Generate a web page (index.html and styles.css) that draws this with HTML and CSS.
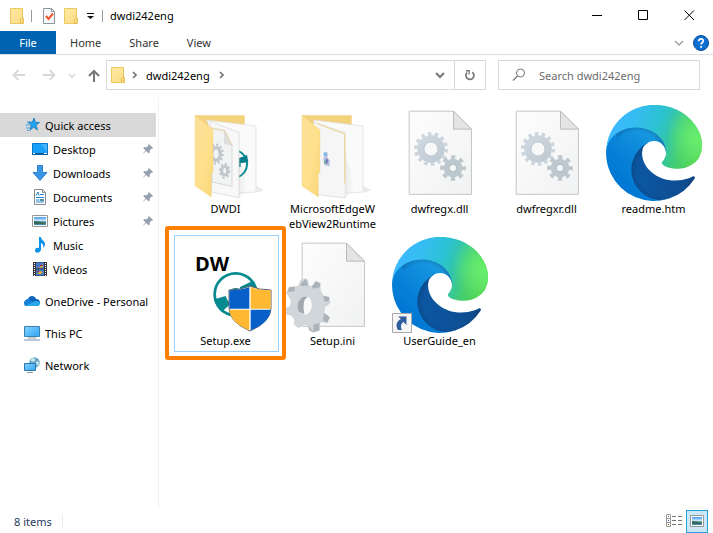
FILE: index.html
```html
<!DOCTYPE html>
<html lang="en">
<head>
<meta charset="utf-8">
<meta name="viewport" content="width=device-width, initial-scale=1">
<title>dwdi242eng</title>
<link rel="stylesheet" href="styles.css">
</head>
<body>
<svg class="defs" aria-hidden="true">
  <defs>
    <linearGradient id="fold" x1="0" y1="0" x2="1" y2="1"><stop offset="0" stop-color="#ffe9a3"/><stop offset="1" stop-color="#fbdc84"/></linearGradient>
    <linearGradient id="flap" x1="0" y1="0" x2="1" y2="1"><stop offset="0" stop-color="#fbe09a"/><stop offset=".55" stop-color="#ffe08c"/><stop offset="1" stop-color="#f8d679"/></linearGradient>
    <linearGradient id="paper" x1="0" y1="0" x2="1" y2="1"><stop offset="0" stop-color="#fdfdfd"/><stop offset="1" stop-color="#f1f2f3"/></linearGradient>
    <linearGradient id="shade"><stop offset="0" stop-color="#9a9a9a" stop-opacity=".4"/><stop offset="1" stop-color="#aaa" stop-opacity="0"/></linearGradient>
    <linearGradient id="steel" x1="0" y1="0" x2="1" y2="1"><stop offset="0" stop-color="#cfd8e2"/><stop offset="1" stop-color="#c0cad2"/></linearGradient>
    <linearGradient id="screen" x1="0" y1="0" x2="1" y2="1"><stop offset="0" stop-color="#7fd4ff"/><stop offset="1" stop-color="#36a4f4"/></linearGradient>
    <linearGradient id="sky" x1="0" y1="0" x2="0" y2="1"><stop offset="0" stop-color="#3f9af0"/><stop offset=".5" stop-color="#d8efff"/><stop offset=".6" stop-color="#3e7468"/><stop offset="1" stop-color="#4a8fb8"/></linearGradient>
    <linearGradient id="edge-dark" x1="63.3" y1="177" x2="241.6" y2="177" gradientUnits="userSpaceOnUse"><stop offset="0" stop-color="#0c59a4"/><stop offset=".5" stop-color="#0d529b"/><stop offset="1" stop-color="#114a8b"/></linearGradient>
    <linearGradient id="edge-blue" x1="157" y1="96" x2="46" y2="217" gradientUnits="userSpaceOnUse"><stop offset="0" stop-color="#1b9de2"/><stop offset=".16" stop-color="#1595df"/><stop offset=".67" stop-color="#0680d7"/><stop offset="1" stop-color="#0078d4"/></linearGradient>
    <linearGradient id="edge-teal" x1="25" y1="70" x2="245" y2="150" gradientUnits="userSpaceOnUse"><stop offset="0" stop-color="#3bb9fd"/><stop offset=".2" stop-color="#35bdf0"/><stop offset=".45" stop-color="#2bc2d3"/><stop offset=".62" stop-color="#33c5a8"/><stop offset=".8" stop-color="#44cc70"/><stop offset="1" stop-color="#50cf4c"/></linearGradient>
    <radialGradient id="edge-lime" cx="0" cy="0" r="97.3" gradientTransform="matrix(.28 .96 -.78 .23 246 95)" gradientUnits="userSpaceOnUse"><stop offset="0" stop-color="#68ee6c"/><stop offset=".3" stop-color="#66eb6e" stop-opacity=".85"/><stop offset="1" stop-color="#66eb6e" stop-opacity="0"/></radialGradient>
    <radialGradient id="edge-rim" cx="86" cy="138" r="86" gradientUnits="userSpaceOnUse"><stop offset=".72" stop-color="#0a3f70" stop-opacity="0"/><stop offset=".93" stop-color="#0a3f70" stop-opacity=".38"/><stop offset="1" stop-color="#0a3f70" stop-opacity=".6"/></radialGradient>
    <radialGradient id="edge-core" cx="158" cy="180" r="96" gradientUnits="userSpaceOnUse"><stop offset=".72" stop-color="#062f5c" stop-opacity="0"/><stop offset="1" stop-color="#062f5c" stop-opacity=".5"/></radialGradient>

    <symbol id="folder-small" viewBox="0 0 14 16"><path d="M.5.5h12v10h.9v5H.5z" fill="url(#fold)" stroke="#ecc860"/><path d="M10.5 15.5v-4l1-1h1.5v5z" fill="#ffe390" stroke="#e6bd4c"/></symbol>

    <symbol id="pin" viewBox="0 0 12 12"><path d="M7 1l4 4-1 1-.8-.2L7.500 8l.2 1.600-1 1L4.200 8 1 11l-.2-.2L3.600 7.500 1.200 5l1-1 1.800.3L6.500 3 6 2z" fill="#94a1ad"/></symbol>

    <symbol id="edge" viewBox="0 0 256 256"><g transform="translate(-4.600 -5)">
      <path fill="url(#edge-dark)" d="M235.680 195.460a93.730 93.730 0 0 1-10.540 4.710 101.870 101.870 0 0 1-35.900 6.460c-47.320 0-88.540-32.550-88.540-74.320a31.480 31.480 0 0 1 16.430-27.310c-42.800 1.800-53.800 46.400-53.800 72.530 0 73.880 68.090 81.370 82.760 81.370 7.910 0 19.840-2.300 27-4.560l1.310-.44a128.340 128.340 0 0 0 66.600-52.800 4 4 0 0 0-5.320-5.640z"/>
      <path fill="url(#edge-core)" d="M235.680 195.460a93.730 93.730 0 0 1-10.540 4.710 101.870 101.870 0 0 1-35.900 6.460c-47.320 0-88.540-32.550-88.540-74.320a31.480 31.480 0 0 1 16.430-27.310c-42.800 1.800-53.800 46.400-53.800 72.530 0 73.880 68.090 81.370 82.760 81.370 7.910 0 19.840-2.300 27-4.560l1.310-.44a128.340 128.340 0 0 0 66.600-52.800 4 4 0 0 0-5.320-5.640z"/>
      <path fill="url(#edge-blue)" d="M110.340 246.340A79.200 79.200 0 0 1 87.600 225a80.720 80.720 0 0 1 29.530-120c3.120-1.470 8.450-4.130 15.540-4a32.350 32.350 0 0 1 25.690 13 31.880 31.880 0 0 1 6.360 18.660c0-.21 24.460-79.600-80-79.600-43.900 0-80 41.660-80 78.210a130.150 130.150 0 0 0 12.110 56 128 128 0 0 0 156.380 67.110 75.550 75.550 0 0 1-62.780-8z"/>
      <path fill="url(#edge-rim)" d="M40 150l77.130-45c3.120-1.470 8.450-4.130 15.540-4a32.350 32.350 0 0 1 25.690 13 31.880 31.880 0 0 1 6.360 18.660c0-.21 24.460-79.600-80-79.600-20 0-40 9-54 22z"/>
      <path fill="url(#edge-teal)" d="M156.940 153.380c-.81 1.050-3.300 2.500-3.300 5.660 0 2.610 1.700 5.120 4.720 7.230 14.380 10 41.490 8.680 41.560 8.680a59.560 59.560 0 0 0 30.270-8.350 61.380 61.380 0 0 0 30.430-52.880c.26-22.410-8-37.310-11.340-43.910C228.090 28.360 182.350 4.520 132.610 4.520a128 128 0 0 0-128 126.200c.48-36.540 36.800-66.050 80-66.050 3.500 0 23.460.34 42 10.070 16.340 8.580 24.900 18.940 30.850 29.210 6.180 10.670 7.280 24.150 7.280 29.520s-2.740 13.330-7.800 19.910z"/>
      <path fill="url(#edge-lime)" d="M156.940 153.380c-.81 1.050-3.300 2.500-3.300 5.660 0 2.610 1.700 5.120 4.720 7.230 14.380 10 41.490 8.680 41.560 8.680a59.560 59.560 0 0 0 30.270-8.350 61.380 61.380 0 0 0 30.430-52.880c.26-22.410-8-37.310-11.340-43.910C228.090 28.360 182.350 4.520 132.610 4.520a128 128 0 0 0-128 126.200c.48-36.540 36.800-66.050 80-66.050 3.500 0 23.460.34 42 10.070 16.340 8.580 24.900 18.940 30.850 29.210 6.180 10.670 7.280 24.150 7.280 29.520s-2.740 13.330-7.800 19.910z"/>
    </g></symbol>

    <g id="page">
      <path d="M57.500 48.500h133l54 54v195.500h-187z" fill="url(#paper)" stroke="#c6c6c6" stroke-width="3"/>
      <path d="M190.500 48.500l54 54h-54z" fill="#e4e4e4" stroke="#bdbdbd" stroke-width="3" stroke-linejoin="round"/>
    </g>
    <g id="gears">
      <circle cx="123" cy="162" r="31" fill="none" stroke="url(#steel)" stroke-width="21"/>
      <circle cx="123" cy="162" r="45" fill="none" stroke="#ccd5de" stroke-width="12" pathLength="28" stroke-dasharray="1 1"/>
      <circle cx="123" cy="162" r="21" fill="none" stroke="#b3bfca" stroke-width="2"/>
      <circle cx="189" cy="219" r="19" fill="none" stroke="#bcc8ce" stroke-width="18"/>
      <circle cx="189" cy="219" r="32" fill="none" stroke="#bcc8ce" stroke-width="13" pathLength="16" stroke-dasharray="1 1" stroke-dashoffset=".5"/>
      <circle cx="189" cy="219" r="11" fill="none" stroke="#a7b4bb" stroke-width="2"/>
    </g>
    <symbol id="dll" viewBox="6 30 288 288"><use href="#page"/><use href="#gears"/></symbol>

    <g id="folder-back">
      <path d="M285 270l27 16-20 8z" fill="#ddd" opacity=".6"/>
      <path d="M105 61h149v40L105 90z" fill="#f4d27c"/>
      <path d="M140 75l148 18v198l-60 4z" fill="#fafafa" stroke="#ddd" stroke-width="2"/>
    </g>
    <path id="folder-flap" d="M105 61l54 43v126l-5 8v68l-49-33z" fill="url(#flap)" stroke="#f0cf7a" stroke-width="1"/>
  </defs>
</svg>

<header class="titlebar">
  <svg class="tb-folder" viewBox="0 0 14 16" aria-hidden="true"><use href="#folder-small"/></svg>
  <span class="tb-sep"></span>
  <button class="quick" aria-label="Properties"><svg width="12" height="16" viewBox="0 0 12 16"><path d="M.5.500h8l3 3v12H.500z" fill="#f6f8fa" stroke="#8f979e"/><path d="M8.500.5v3h3" fill="none" stroke="#8f979e"/><path d="M3 8l2.500 3L10 5.500" fill="none" stroke="#f0592b" stroke-width="2"/></svg></button>
  <button class="quick" aria-label="New folder"><svg width="14" height="16"><use href="#folder-small"/></svg></button>
  <button class="quick" aria-label="Customize toolbar"><svg width="8" height="6" viewBox="0 0 8 6"><path d="M0 0h7v1H0zM0 3h7L3.500 6z" fill="#111"/></svg></button>
  <span class="tb-sep"></span>
  <h1 class="title">dwdi242eng</h1>
  <div class="caption">
    <button aria-label="Minimize"><svg width="11" height="11"><path d="M0 5h10v1H0z"/></svg></button>
    <button aria-label="Maximize"><svg width="11" height="11"><path d="M.5.500h9v9h-9z" fill="none" stroke="#000"/></svg></button>
    <button aria-label="Close"><svg width="11" height="11"><path d="M.5.500l9.500 9.500M10 .5L.500 10" fill="none" stroke="#000"/></svg></button>
  </div>
</header>

<nav class="ribbon" aria-label="Ribbon">
  <button class="tab file">File</button>
  <button class="tab">Home</button>
  <button class="tab">Share</button>
  <button class="tab">View</button>
  <button class="expand" aria-label="Expand ribbon"><svg width="10" height="6" viewBox="0 0 10 6"><path d="M1 1l4 4 4-4" fill="none" stroke="#a0a5aa" stroke-width="1.500"/></svg></button>
  <button class="help" aria-label="Help"><svg width="16" height="16" viewBox="0 0 16 16"><circle cx="8" cy="8" r="7.500" fill="#0a6fd0" stroke="#08509c"/><path d="M5.700 6.200C5.700 3 10.500 3.200 10.300 6c-.1 1.500-2.200 1.600-2.200 3.600" fill="none" stroke="#fff" stroke-width="1.700"/><path d="M7.200 11h1.800v1.700H7.200z" fill="#fff"/></svg></button>
</nav>

<div class="navbar">
  <div class="history">
    <button aria-label="Back"><svg width="14" height="12" viewBox="0 0 14 12"><path d="M13 6H2M6.500 1l-5 5 5 5" fill="none" stroke="#d9d9d9" stroke-width="2"/></svg></button>
    <button aria-label="Forward"><svg width="14" height="12" viewBox="0 0 14 12"><path d="M1 6h11M7.500 1l5 5-5 5" fill="none" stroke="#d9d9d9" stroke-width="2"/></svg></button>
    <button class="recent" aria-label="Recent locations"><svg width="8" height="5" viewBox="0 0 8 5"><path d="M1 1l3 3 3-3" fill="none" stroke="#d4d4d4" stroke-width="1.500"/></svg></button>
    <button aria-label="Up"><svg width="12" height="13" viewBox="0 0 12 13"><path d="M6 13V2M1 7l5-5 5 5" fill="none" stroke="#777" stroke-width="2"/></svg></button>
  </div>
  <div class="address">
    <svg class="addr-folder" width="14" height="16" aria-hidden="true"><use href="#folder-small"/></svg>
    <svg width="5" height="8" viewBox="0 0 5 8" aria-hidden="true"><path d="M1 1l3 3-3 3" fill="none" stroke="#777" stroke-width="1.700"/></svg>
    <button class="crumb">dwdi242eng</button>
    <svg width="5" height="8" viewBox="0 0 5 8" aria-hidden="true"><path d="M1 1l3 3-3 3" fill="none" stroke="#777" stroke-width="1.700"/></svg>
    <button class="drop" aria-label="Previous locations"><svg width="10" height="7" viewBox="0 0 10 7"><path d="M1 1l4 4 4-4" fill="none" stroke="#777" stroke-width="2"/></svg></button>
    <button class="refresh" aria-label="Refresh"><svg width="12" height="12" viewBox="0 0 12 12"><path d="M8.300 3.200a4 4 0 1 1-5.200.4" fill="none" stroke="#777" stroke-width="1.700"/><path d="M2 1h3.800v4.500H4.500V2.500H2z" fill="#777"/></svg></button>
  </div>
  <label class="search">
    <svg width="14" height="14" viewBox="0 0 14 14" aria-hidden="true"><circle cx="8.500" cy="5" r="4" fill="none" stroke="#777"/><path d="M5.500 8L1 12.500" stroke="#777" stroke-width="1.200"/></svg>
    <input type="search" placeholder="Search dwdi242eng" aria-label="Search dwdi242eng">
  </label>
</div>

<div class="body">
  <nav class="side" aria-label="Folders">
    <a class="row selected" href="#"><svg class="ico" viewBox="0 0 16 16"><path d="M10 1l1.300 4.300 4.200.2-3.500 2.700 1.500 4.800-3.800-2.800-3.800 3 1.200-5L4 5.500l4.300-.3z" fill="#26a3ef" stroke="#1379bd" stroke-width=".8"/><path d="M3 5h4M1.500 8h4M2 11h3.500M3 13.500h2" stroke="#3c9ddb" stroke-width="1"/></svg><span>Quick access</span></a>
    <a class="row sub" href="#"><svg class="ico" viewBox="0 0 16 16"><path d="M.5 2.500h15v11H.500z" fill="#18a0f8" stroke="#0f78c8"/><path d="M9 3h6v8z" fill="#43b5ff"/><path d="M0 12h16v2H0z" fill="#0b5c9e"/><path d="M1 12.500h2M12 12.500h3" stroke="#fff"/></svg><span>Desktop</span><svg class="pin"><use href="#pin"/></svg></a>
    <a class="row sub" href="#"><svg class="ico" viewBox="0 0 16 16"><path d="M5.500.500h5v7h4.500L8 15.500 1 7.500h4.500z" fill="#3b97e6" stroke="#2a7fcf"/></svg><span>Downloads</span><svg class="pin"><use href="#pin"/></svg></a>
    <a class="row sub" href="#"><svg class="ico" viewBox="0 0 16 16"><path d="M2.500.500h8l3 3v12h-11z" fill="#fff" stroke="#878c91"/><path d="M10.500.5v3h3" fill="none" stroke="#878c91"/><path d="M4 6.500L6 3l1 3.500M8 5.500h4M4 8.500h8M4 11h3.500M4 13h8" fill="none" stroke="#2188d0"/><path d="M8 10h4v2H8z" fill="#4f8a99"/></svg><span>Documents</span><svg class="pin"><use href="#pin"/></svg></a>
    <a class="row sub" href="#"><svg class="ico" viewBox="0 0 16 16"><path d="M.5 2.500h15v11H.500z" fill="#fff" stroke="#969696"/><path d="M2 4h12v8H2z" fill="url(#sky)"/><path d="M2 8q5 0 12 3H2z" fill="#35685f"/></svg><span>Pictures</span><svg class="pin"><use href="#pin"/></svg></a>
    <a class="row sub" href="#"><svg class="ico" viewBox="0 0 16 16"><path d="M7 0h2c0 3 4 4 4 7 0 2-1 3-2 4 1-3-.5-4.500-2-5v6.500C9 16 3 17 3 13.500 3 11 5.500 10.500 7 11z" fill="#0c92ec"/></svg><span>Music</span></a>
    <a class="row sub" href="#"><svg class="ico" viewBox="0 0 16 16"><path d="M1 1h14v14H1z" fill="#39363a"/><path d="M4 1.500h8v6H4zM4 8.500h8v6H4z" fill="#4379c9"/><path d="M5 6h3l3-3v3l-2 1zM5 13l3-3 3 1-2 2z" fill="#dfac38"/><path d="M8 4h3v1H8zM5 10h2v1H5z" fill="#b32b38"/><path d="M2.500 2v13M13.500 2v13" stroke="#fff" stroke-dasharray="1 1"/></svg><span>Videos</span></a>
    <a class="row group" href="#"><svg class="ico" viewBox="0 0 16 16"><path d="M4 6c1-4 7-4 8 0 3 0 4 2 4 3.500S15 13 13 13H3c-4 0-4-6 1-7z" fill="#0f64b8"/><path d="M1 8c2-3 5-2 6-.5L13 13H3.500C0 13-.5 10 1 8z" fill="#1481d8"/><path d="M2 12.500L9 9c2-2 6-1 7 .5 0 2-1 3.500-3 3.500H4z" fill="#28a8ea"/></svg><span>OneDrive - Personal</span></a>
    <a class="row group" href="#"><svg class="ico" viewBox="0 0 16 16"><path d="M.5 1.500h15v10H.500z" fill="url(#screen)" stroke="#3f7fae"/><path d="M4 13h8" stroke="#8d9ba6"/><path d="M0 15h16" stroke="#7d91a3"/></svg><span>This PC</span></a>
    <a class="row group" href="#"><svg class="ico" viewBox="0 0 16 16"><circle cx="10.500" cy="5.500" r="5.300" fill="#6ba9c4"/><path d="M7 2c2-2 4-1 4 1S8 5 7 4zM12 5c2-1 4 0 3 2l-2 2z" fill="#c8e3ed"/><path d="M.5 6.500h11v7H.500z" fill="url(#screen)" stroke="#2d78ae"/><path d="M3 15.500h6" stroke="#8d9ba6"/></svg><span>Network</span></a>
  </nav>

  <main class="files">
    <a class="item" href="#">
      <svg class="art" viewBox="54 30 288 288"><use href="#folder-back"/>
        <path d="M232 167a42 42 0 0 1 0 80" fill="none" stroke="#048a93" stroke-width="6"/><path d="M236 190l25-10 4 22-29 3zM236 198h6v18h-6z" fill="#067f8b"/>
        <path d="M150 78l87 35v196l-82-18z" fill="#f8f8f8" stroke="#d4d4d4" stroke-width="2"/>
        <path d="M236 180l28 100-12 14-15 14z" fill="url(#shade)" opacity=".35"/>
        <path d="M156 101l38 5 22 44v124l-60-13z" fill="#f2f3f3" stroke="#c9c9c9" stroke-width="2"/><path d="M192 105l23 47-23-6z" fill="#ddd"/>
        <path d="M150 97l45 11 20 43" fill="none" stroke="#ebcf8a" stroke-width="2"/>
        <g fill="none" stroke="#c0c8cc"><ellipse cx="168" cy="177" rx="13" ry="19" stroke-width="10"/><ellipse cx="168" cy="177" rx="20" ry="28" stroke-width="7" pathLength="24" stroke-dasharray="1 1"/><ellipse cx="194" cy="227" rx="9" ry="13" stroke-width="9"/><ellipse cx="194" cy="227" rx="14" ry="21" stroke-width="6" pathLength="16" stroke-dasharray="1 1"/></g>
        <use href="#folder-flap"/></svg>
      <span>DWDI</span></a>
    <a class="item" href="#">
      <svg class="art" viewBox="54 30 288 288"><use href="#folder-back"/>
        <path d="M139 81l96 32v196l-82-10z" fill="#f6f6f7" stroke="#d4d4d4" stroke-width="2"/>
        <path d="M150 86l83 31v148" fill="none" stroke="#f1d58d" stroke-width="3"/>
        <path d="M236 180l28 100-12 14-15 14z" fill="url(#shade)" opacity=".35"/>
        <path d="M169 174l10-4 4 8-2 10 8 8-2 18-15-4-3-18 4-10z" fill="#b5bfe0"/><path d="M170 173h8v10h-8z" fill="#74b9ea"/><path d="M178 190l5 5-3 12-5-3z" fill="#6e6bb5"/><path d="M172 196l4 2v8h-4z" fill="#52b08f"/>
        <use href="#folder-flap"/></svg>
      <span>MicrosoftEdgeW<wbr>ebView2Runtime</span></a>
    <a class="item" href="#"><svg class="art"><use href="#dll"/></svg><span>dwfregx.dll</span></a>
    <a class="item" href="#"><svg class="art"><use href="#dll"/></svg><span>dwfregxr.dll</span></a>
    <a class="item" href="#"><svg class="art"><use href="#edge"/></svg><span>readme.htm</span></a>
    <a class="item focused" href="#">
      <svg class="art" viewBox="54 51 288 288">
        <text class="logo-text" x="105" y="152">DW</text>
        <circle cx="227" cy="223" r="63" fill="none" stroke="#058a90" stroke-width="8"/>
        <path d="M163 238l34-10q4 14 14 24l-26 24q-18-16-22-38zM240 201l36-17 16 24-52 6zM208 222q0-18 19-18t19 18h-8q0-10-11-10t-11 10z" fill="#058a90"/>
        <path d="M270 198q26 12 63 12v54q0 42-63 69-63-27-63-69v-54q37 0 63-12z" fill="#fff" stroke="#5c6065" stroke-width="3"/>
        <path d="M268 201v65h-60v-55q34 0 60-10zM272 269h60q-3 38-60 62z" fill="#0660c8"/>
        <path d="M272 201v65h60v-55q-34 0-60-10zM268 269h-60q3 38 60 62z" fill="#ffb831"/>
      </svg>
      <span>Setup.exe</span><i class="marker"></i></a>
    <a class="item" href="#">
      <svg class="art" viewBox="15 36 288 288"><use href="#page" x="9" y="6"/>
        <path fill-rule="evenodd" fill="#d0d6da" stroke="#bcc4ca" stroke-width="1" d="M62 165l15-4 7 5 1 15 13 4 9-16 14 6v22l9 15 18 5 2 18-16 12-2 17 17 13-7 16-20-3-3 6-1 20-18 6-12-6-4-16-12-1-17 9-13-10 1-15-7-11-17-4-1-18 13-7 2-18-14-22 8-16 18-2 11-3zM78 214c-32 0-36 54-4 56 28 1 30-56 4-56z"/>
        <path d="M77 161l8 20-20 3-5-5zM107 169l14 6-2 12-18 4-6-6zM27 187l18-2-2 14-19 2zM130 212l18 5-2 12-12 1zM132 264l17 13-7 16-13-7zM100 299l18-5v22l-18 6zM84 300l16 22-12-6z" fill="#aab3b9"/>
        <path d="M62 221q10-9 20-5-17 12-9 50-16 0-20-13-4-20 9-32z" fill="#a1a9ae"/>
      </svg>
      <span>Setup.ini</span></a>
    <a class="item" href="#">
      <svg class="art"><use href="#edge"/></svg>
      <svg class="shortcut" viewBox="0 0 20 20"><path d="M.5.500h19v19H.500z" fill="#f6f6f6" stroke="#a9a9a9"/><path d="M6 3.500h8.500V12l-3-3c-3 2-3 5-1.500 8H6c-3-5-1-9 3-11z" fill="#2f5da0"/></svg>
      <span>UserGuide_en</span></a>
  </main>
</div>

<footer class="status">
  <span class="count">8 items</span>
  <div class="views">
    <button aria-label="Details view"><svg width="17" height="14" viewBox="0 0 17 14"><path d="M.5.500h4v12h-4zM.5 4.500h4M.5 8.500h4" fill="#fff" stroke="#9a9a9a"/><path d="M2 2h1v1H2zM2 6h1v1H2z" fill="#345fa5"/><path d="M2 10h1v1H2z" fill="#c33"/><path d="M6 2.500h4M12 2.500h4M6 6.500h4M12 6.500h4M6 10.500h4M12 10.500h4" stroke="#777"/></svg></button>
    <button class="on" aria-label="Large icons view"><svg width="14" height="12" viewBox="0 0 14 12"><path d="M.5.500h13v11H.500z" fill="#fff" stroke="#969696"/><path d="M2 2h10v8H2z" fill="url(#sky)"/><path d="M2 6q5 0 10 3H2z" fill="#35685f"/></svg></button>
  </div>
</footer>
</body>
</html>
```
FILE: styles.css
```css
* { box-sizing: border-box; }

body {
  margin: 0;
  min-height: 100vh;
  display: flex;
  flex-direction: column;
  background: #fff;
  color: #000;
  font: 11px/15px "Noto Sans", "Open Sans", sans-serif;
}

button, input { font: inherit; color: inherit; }

button {
  display: flex;
  align-items: center;
  justify-content: center;
  padding: 0;
  border: 0;
  background: none;
}

a { color: inherit; text-decoration: none; }
svg { display: block; flex: none; }
.defs { position: absolute; width: 0; height: 0; }

/* Title bar */
.titlebar { display: flex; align-items: center; height: 31px; padding: 0 1px 0 10px; }
.tb-folder { width: 14px; height: 16px; }
.tb-sep { width: 1px; height: 12px; margin: 0 7px; background: #9a9a9a; }
.quick { margin-left: 4px; }
.quick + .quick { margin-left: 9px; }
.title { margin: 0; font-size: 11px; font-weight: 400; }
.caption { display: flex; align-self: stretch; margin-left: auto; }
.caption button { width: 46px; }

/* Ribbon */
.ribbon { display: flex; height: 24px; padding-right: 4px; border-bottom: 1px solid #dadbdc; }
.tab { padding: 0 14px; color: #333; }
.tab.file { width: 56px; background: #0063b1; color: #fff; }
.expand { margin-left: auto; padding-right: 9px; }

/* Navigation row */
.navbar { display: flex; align-items: center; gap: 12px; height: 42px; padding: 0 13px 2px 12px; }
.history { display: flex; align-items: center; gap: 12px; margin-right: -6px; }
.history button:nth-child(2) { margin-left: 4px; }
.address { display: flex; flex: 1; align-items: center; height: 30px; padding-left: 4px; border: 1px solid #d9d9d9; }
.addr-folder { margin-right: 7px; }
.crumb { padding: 0 9px; }
.drop { width: 28px; margin-left: auto; }
.refresh { width: 31px; align-self: stretch; border-left: 1px solid #d9d9d9; }
.search { display: flex; align-items: center; gap: 13px; width: 202px; height: 30px; padding: 0 13px; border: 1px solid #d9d9d9; }
.search input { flex: 1; min-width: 0; padding: 0; border: 0; outline: 0; background: none; appearance: none; }
.search input::placeholder { color: #6d6d6d; opacity: 1; }

/* Body */
.body { display: flex; flex: 1; }
.side { width: 159px; padding: 16px 2px 0 0; border-right: 1px solid #f2f2f2; }
.row { display: flex; align-items: center; gap: 5px; height: 24px; padding: 0 2px 0 24px; white-space: nowrap; }
.row.sub { padding-left: 32px; }
.row.group { margin-top: 8px; }
.row.selected { background: #d9d9d9; }
.ico { width: 16px; height: 16px; }
.pin { width: 12px; height: 12px; margin-left: auto; }

.files {
  flex: 1;
  display: grid;
  grid-template-columns: repeat(auto-fill, 107px);
  grid-auto-rows: 132px;
  align-content: start;
  padding: 6px 0 0 13px;
}
.item { position: relative; display: flex; flex-direction: column; align-items: center; padding-top: 2px; text-align: center; }
.item span { width: 94px; }
.art { width: 96px; height: 96px; }
.item.focused::before { content: ""; position: absolute; inset: 0 0 15px 2px; border: 1px solid #99d1ff; }
.marker { position: absolute; inset: -9px -7px 7px; border: 4px solid #ff8000; border-radius: 3px; }
.shortcut { position: absolute; left: 6px; top: 78px; width: 20px; height: 20px; }
.logo-text { font: 700 60px "Open Sans", sans-serif; }

/* Status bar */
.status { display: flex; align-items: center; height: 24px; padding: 0 5px 0 14px; color: #1e3a5f; }
.count { padding-right: 10px; border-right: 1px solid #e9eef2; }
.views { display: flex; gap: 3px; margin-left: auto; }
.views .on { width: 22px; height: 23px; border: 1px solid #26a0da; background: #cce8f7; }
```
